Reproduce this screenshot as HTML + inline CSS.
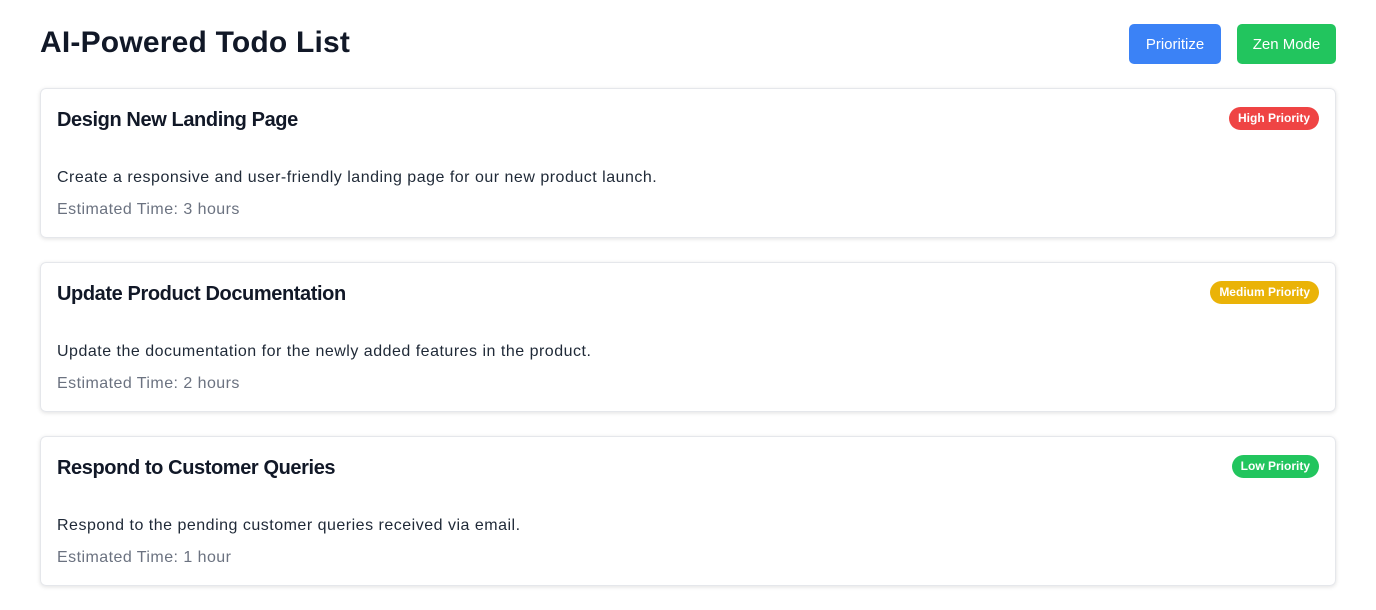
<!DOCTYPE html>
<html><head><style>
body{margin:0;background:#fff;font-family:"Liberation Sans",sans-serif;color:#111827}
h1{position:absolute;left:40px;top:23px;margin:0;font-size:30px;font-weight:700;line-height:40px;letter-spacing:0.2px}
.btn{position:absolute;top:24px;height:40px;border-radius:5px;color:#fff;font-size:15px;line-height:42px;text-align:center}
.card{position:absolute;left:40px;width:1294px;height:148px;border:1px solid #e5e7eb;border-radius:6px;box-shadow:0 1px 4px rgba(0,0,0,.12)}
.t{position:absolute;left:16px;top:17px;font-size:20px;font-weight:700;line-height:28px;letter-spacing:-0.4px}
.d{position:absolute;left:16px;top:77px;font-size:16px;line-height:24px;color:#1f2937;letter-spacing:0.5px}
.e{position:absolute;left:16px;top:109px;font-size:16px;line-height:24px;color:#6b7280;letter-spacing:0.45px}
.b{position:absolute;right:16px;top:18px;height:23px;line-height:23px;border-radius:12px;color:#fff;font-size:12px;font-weight:700;padding:0 9px}
</style></head><body>
<h1>AI-Powered Todo List</h1>
<div class="btn" style="left:1129px;width:92px;background:#3b82f6">Prioritize</div>
<div class="btn" style="left:1237px;width:99px;background:#22c55e">Zen Mode</div>
<div class="card" style="top:88px"><div class="t">Design New Landing Page</div><div class="b" style="background:#ef4444">High Priority</div><div class="d">Create a responsive and user-friendly landing page for our new product launch.</div><div class="e">Estimated Time: 3 hours</div></div>
<div class="card" style="top:262px"><div class="t">Update Product Documentation</div><div class="b" style="background:#eab308">Medium Priority</div><div class="d">Update the documentation for the newly added features in the product.</div><div class="e">Estimated Time: 2 hours</div></div>
<div class="card" style="top:436px"><div class="t">Respond to Customer Queries</div><div class="b" style="background:#22c55e">Low Priority</div><div class="d">Respond to the pending customer queries received via email.</div><div class="e">Estimated Time: 1 hour</div></div>
</body></html>
